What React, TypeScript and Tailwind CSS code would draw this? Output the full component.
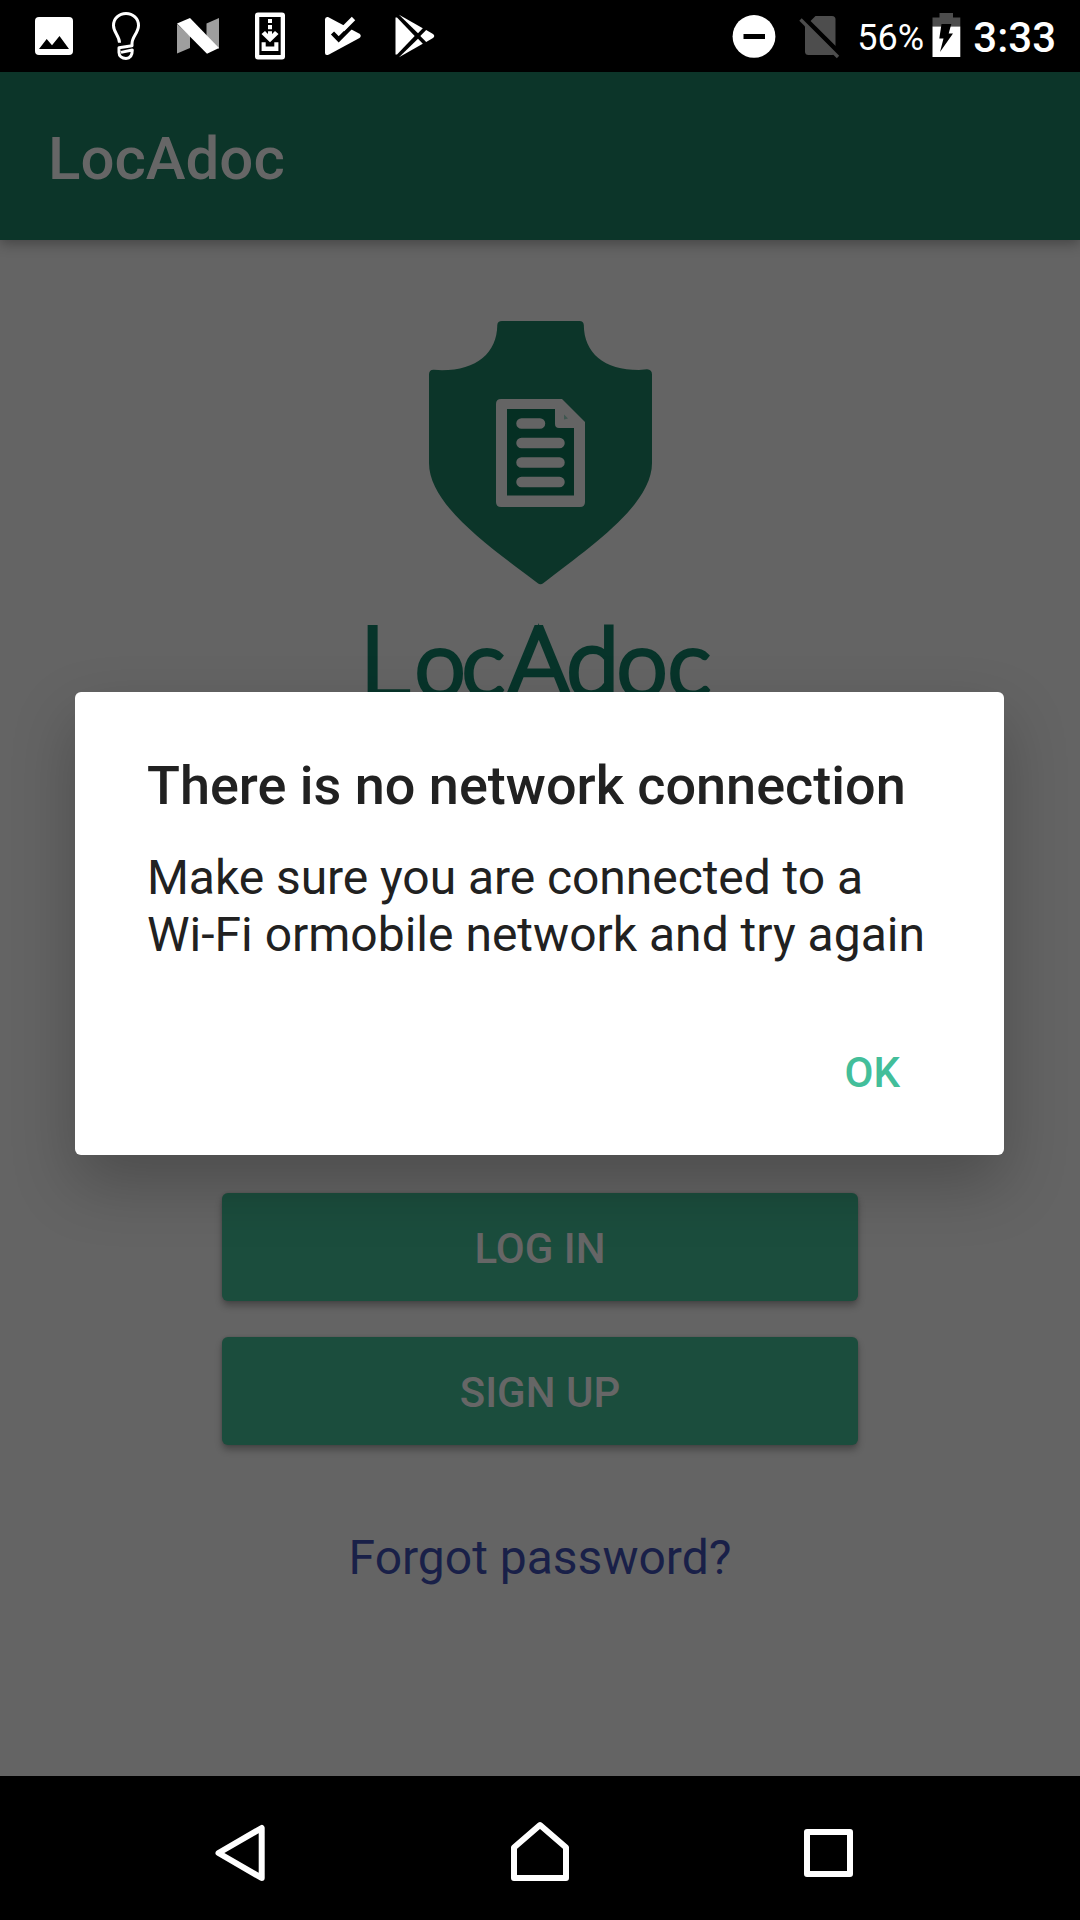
import React from "react";

function ImageIcon() {
  return (
    <svg className="h-[72px] w-[72px]" viewBox="0 0 72 72">
      <rect x="17" y="17" width="38" height="38" rx="4" fill="#fff" />
      <path d="M21 49 L28.7 39 L34 45.3 L41.5 36 L51 49 Z" fill="#000" />
    </svg>
  );
}

function BulbIcon() {
  return (
    <svg className="h-[72px] w-[72px]" viewBox="0 0 72 72" fill="none" stroke="#fff" strokeWidth="3" strokeLinejoin="round">
      <path d="M29.5 42.8 C29.5 36 23.5 32.5 23.5 25.5 C23.5 18.5 29 13.5 36 13.5 C43 13.5 48.5 18.5 48.5 25.5 C48.5 32.5 42 37 42 43.5 V45.7 L29 47.7 V52.5 C29 56 32 58.4 36 58.4 C40 58.4 42.3 56 42.3 50 L31 52.4" />
    </svg>
  );
}

function NougatIcon() {
  return (
    <svg className="h-[72px] w-[72px]" viewBox="0 0 72 72">
      <path d="M15 24 L28 36 V48 L15 53.5 Z" fill="#9e9e9e" />
      <path d="M44.5 23.5 L57 18 V49 L44.5 38 Z" fill="#9e9e9e" />
      <path d="M15 23.5 L28 18 L57 48 L45 53.7 Z" fill="#fff" />
    </svg>
  );
}

function UpdateIcon() {
  return (
    <svg className="h-[72px] w-[72px]" viewBox="0 0 72 72" fill="#fff">
      <path fillRule="evenodd" d="M24 12.5 H48 Q51 12.5 51 15.5 V56.5 Q51 59.5 48 59.5 H24 Q21 59.5 21 56.5 V15.5 Q21 12.5 24 12.5 Z M25.3 17 V55 H46.7 V17 Z" />
      <path d="M34 19 H38 V23 H34 Z M34 25 H38 V29.2 H34 Z M34 31.2 H38 V34 L41 31 L44.5 34 L36 42.3 L27.5 34 L31 31 L34 34 Z" />
      <path d="M27.6 42.3 H31.7 V46.5 H40.3 V42.3 H44.4 V51 H27.6 Z" />
    </svg>
  );
}

function PlayCheckIcon() {
  return (
    <svg className="h-[72px] w-[72px]" viewBox="0 0 72 72">
      <path d="M19 19.5 Q19 16.5 22 17 L53.5 33.7 Q56 35.7 53.5 38 L23 54.5 Q19 56 19 53 Z" fill="#fff" />
      <path d="M26.5 33 L32.7 39.3 L51.5 20.5" fill="none" stroke="#000" strokeWidth="4.4" />
      <path d="M36.5 29.5 L47.5 18.5" stroke="#fff" strokeWidth="4.8" />
    </svg>
  );
}

function PlayStoreIcon() {
  return (
    <svg className="h-[72px] w-[72px]" viewBox="0 0 72 72" fill="#fff">
      <path d="M17.5 17.5 L19 17.5 L36.7 36 L19 54.5 L17.5 54.5 Z" />
      <path d="M21 14.8 L44.8 28.3 L40 33.2 Z" />
      <path d="M21 57.2 L44.8 43.7 L40 38.8 Z" />
      <path d="M48.2 30 L55 34 Q57.5 36 55 38 L48.2 42 L42.3 36 Z" />
    </svg>
  );
}

function StatusBar() {
  return (
    <header className="flex h-[72px] shrink-0 items-center justify-between bg-black pl-[18px] pr-6 text-white">
      <div className="flex">
        <ImageIcon />
        <BulbIcon />
        <NougatIcon />
        <UpdateIcon />
        <PlayCheckIcon />
        <PlayStoreIcon />
      </div>
      <div className="flex h-[72px]">
        <svg className="h-[72px] w-[44px]" viewBox="0 0 44 72">
          <circle cx="22" cy="36.4" r="21.4" fill="#fff" />
          <rect x="11.5" y="34" width="21.5" height="5" fill="#000" />
        </svg>
        <svg className="ml-[22px] h-[72px] w-[44px]" viewBox="0 0 44 72">
          <path d="M17.5 16 H34 Q37.5 16 37.5 19.5 V51.5 Q37.5 55 34 55 H10.5 Q7 55 7 51.5 V26.5 Z" fill="#4d4d4d" />
          <path d="M4.5 16.5 L42 53.8" stroke="#000" strokeWidth="5" />
          <path d="M2.5 19.5 L40 57" stroke="#4d4d4d" strokeWidth="3.4" />
        </svg>
        <span className="ml-[15.5px] w-[74.5px] whitespace-nowrap pt-[1.5px] text-[36px] leading-[72px]">56%</span>
        <svg className="h-[72px] w-[29px]" viewBox="0 0 29 72">
          <path d="M0.5 17.5 H7.5 V13 H21 V17.5 H28.3 V26.5 H0.5 Z" fill="#4d4d4d" />
          <path d="M0.5 26.5 H28.3 V57 H0.5 Z" fill="#fff" />
          <path d="M9.5 24 H19.3 L16.7 33.5 H21 L8 52 L11.5 38.5 H7.3 Z" fill="#000" />
        </svg>
        <span className="ml-[12.5px] whitespace-nowrap pt-[2px] text-[42px] font-medium leading-[72px]">3:33</span>
      </div>
    </header>
  );
}

function Logo() {
  return (
    <svg className="h-[420px] w-[400px] shrink-0" viewBox="0 0 400 420">
      <path
        d="M162 21 H239.500 Q243.500 21 243.800 25 C244 53 264 70 299 70 L307 69.300 Q312 69.500 312 74.500 V163 C312 205 250 247 203.500 283 Q200.500 285.500 197.500 283 C150 247 89 205 89 163 V74.500 Q89 69.500 94 69.800 L102 70.300 C137 70 157 53 157.300 25 Q157.500 21 162 21 Z"
        fill="#0c3529"
      />
      <path d="M161 99 H222 L245 122 V202 Q245 207 240 207 H161 Q156 207 156 202 V104 Q156 99 161 99 Z" fill="#646464" />
      <path d="M167 109 H215 V124 Q215 128 219 128 H234 V195.500 H167 Z" fill="#052f23" />
      <path d="M224 114.500 L228 118.500 L224 119.500 Z" fill="#3f5750" />
      <path d="M181.500 123.500 H200 M181.500 143 H219.500 M181.500 162.500 H219.500 M181.500 182 H219.500" stroke="#646464" strokeWidth="10.500" strokeLinecap="round" />
      <text y="396" fill="#07342a" stroke="#07342a" strokeWidth="5" fontFamily="Lato, sans-serif" fontWeight="300" fontSize="97">
        <tspan x="20">L</tspan>
        <tspan x="75 122" fontSize="90">oc</tspan>
        <tspan x="167">A</tspan>
        <tspan x="226.500" fontSize="95">d</tspan>
        <tspan x="277 328" fontSize="90">oc</tspan>
      </text>
    </svg>
  );
}

function ActionButton({ label }: { label: string }) {
  return (
    <button className="flex h-[108px] w-[636px] shrink-0 items-center justify-center rounded-md bg-[#1b4d3d] pt-[3px] text-[42px] font-medium leading-[50px] text-[#666666] shadow-[0_5px_7px_rgba(0,0,0,0.28),0_0_3px_rgba(0,0,0,0.15)]">
      {label}
    </button>
  );
}

function NetworkDialog() {
  return (
    <section
      role="dialog"
      className="absolute left-[75px] top-[692px] flex h-[463px] w-[929px] flex-col rounded-md bg-white pl-[72px] pr-[72px] pt-[62px] text-[#212121] shadow-[0_28px_64px_rgba(0,0,0,0.24)]"
    >
      <h2 className="whitespace-nowrap text-[54px] font-medium leading-[64px]">There is no network connection</h2>
      <p className="mt-[31px] whitespace-nowrap text-[48px] leading-[57px]">
        <span className="tracking-[-0.06px]">Make sure you are connected to a</span>
        <br />
        Wi-Fi ormobile network and try again
      </p>
      <button className="mr-8 mt-[85px] self-end text-[42px] font-medium leading-[50px] text-[#43be9a]">OK</button>
    </section>
  );
}

function NavBar() {
  return (
    <nav className="flex h-36 shrink-0 bg-black pl-[210px]">
      <svg className="h-36 w-[60px]" viewBox="0 0 60 144" fill="none" stroke="#fff" strokeWidth="6" strokeLinejoin="round">
        <path d="M8.500 77 L51.700 52 V102 Z" />
      </svg>
      <svg className="ml-60 h-36 w-[60px]" viewBox="0 0 60 144" fill="none" stroke="#fff" strokeWidth="6" strokeLinejoin="round">
        <path d="M4 71.500 L30 49 L56 71.500 V102 H4 Z" />
      </svg>
      <svg className="ml-[228px] h-36 w-[60px]" viewBox="0 0 60 144" fill="none" stroke="#fff" strokeWidth="6" strokeLinejoin="round">
        <rect x="9" y="56" width="43" height="42" />
      </svg>
    </nav>
  );
}

export default function App() {
  return (
    <div className="relative flex h-[1920px] w-[1080px] flex-col overflow-hidden bg-[#646464] font-[Roboto,sans-serif]">
      <StatusBar />
      <div className="z-0 flex h-[168px] shrink-0 items-center bg-[#0c3529] pl-12 pt-[5px] shadow-[0_4px_12px_rgba(0,0,0,0.3)]">
        <h1 className="text-[60px] font-medium leading-[70px] text-[#666666]">LocAdoc</h1>
      </div>
      <main className="flex flex-1 flex-col items-center pt-[60px]">
        <Logo />
        <div className="mt-[473px] flex flex-col gap-9">
          <ActionButton label="LOG IN" />
          <ActionButton label="SIGN UP" />
        </div>
        <a className="mt-[84px] text-[48px] leading-[57px] text-[#192048]">Forgot password?</a>
      </main>
      <NavBar />
      <NetworkDialog />
    </div>
  );
}
